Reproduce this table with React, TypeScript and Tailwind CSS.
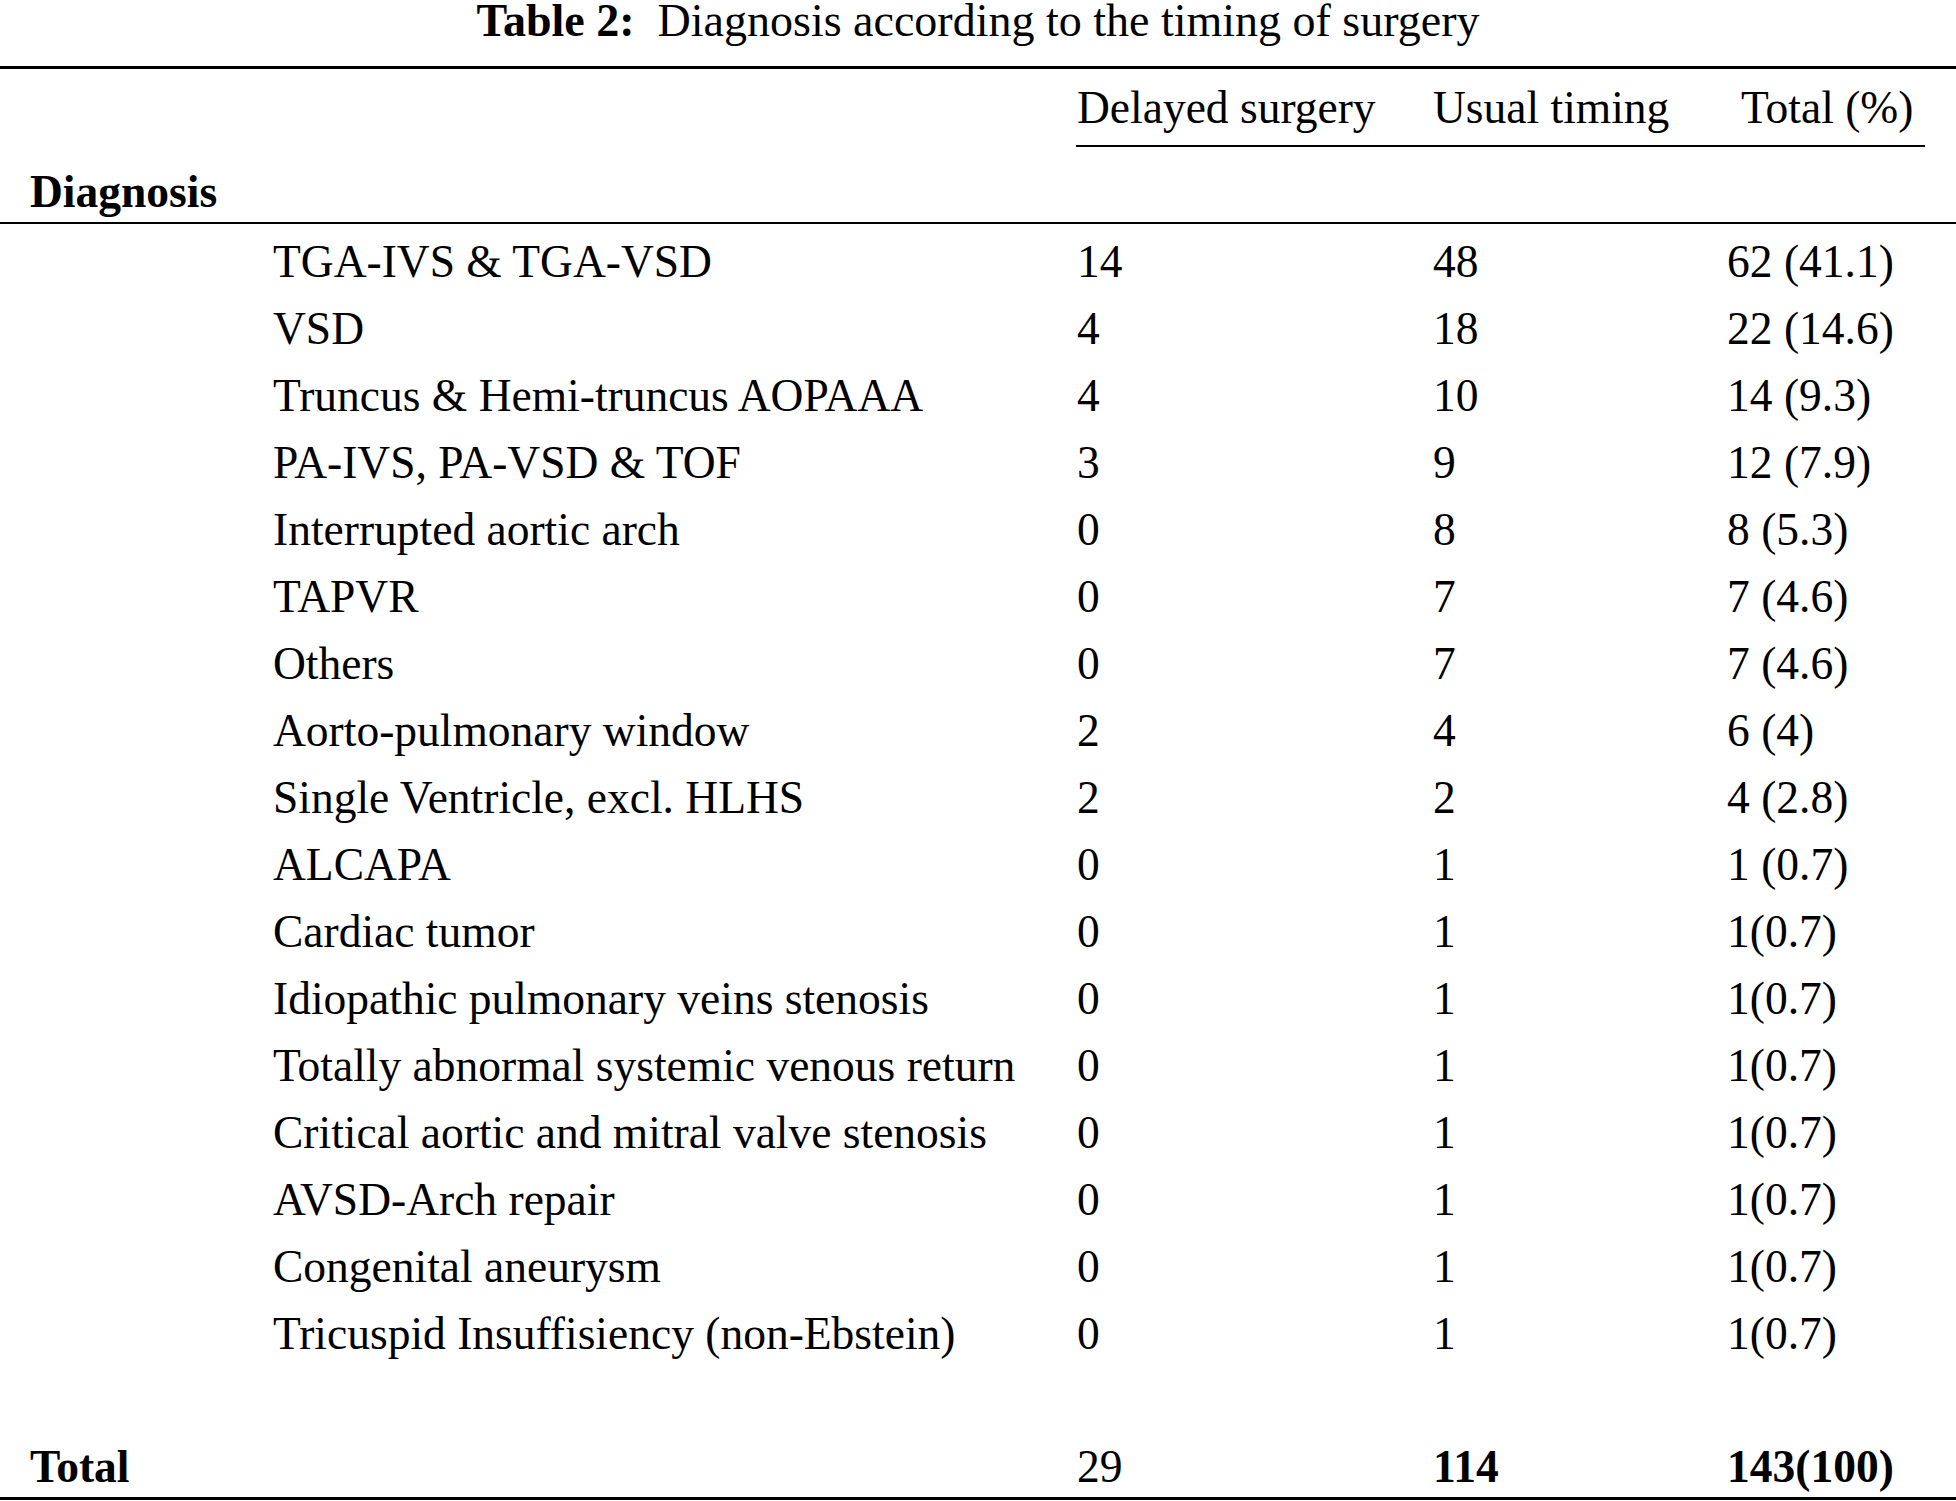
const rows: [string, string, string, string][] = [
  ["TGA-IVS & TGA-VSD", "14", "48", "62 (41.1)"],
  ["VSD", "4", "18", "22 (14.6)"],
  ["Truncus & Hemi-truncus AOPAAA", "4", "10", "14 (9.3)"],
  ["PA-IVS, PA-VSD & TOF", "3", "9", "12 (7.9)"],
  ["Interrupted aortic arch", "0", "8", "8 (5.3)"],
  ["TAPVR", "0", "7", "7 (4.6)"],
  ["Others", "0", "7", "7 (4.6)"],
  ["Aorto-pulmonary window", "2", "4", "6 (4)"],
  ["Single Ventricle, excl. HLHS", "2", "2", "4 (2.8)"],
  ["ALCAPA", "0", "1", "1 (0.7)"],
  ["Cardiac tumor", "0", "1", "1(0.7)"],
  ["Idiopathic pulmonary veins stenosis", "0", "1", "1(0.7)"],
  ["Totally abnormal systemic venous return", "0", "1", "1(0.7)"],
  ["Critical aortic and mitral valve stenosis", "0", "1", "1(0.7)"],
  ["AVSD-Arch repair", "0", "1", "1(0.7)"],
  ["Congenital aneurysm", "0", "1", "1(0.7)"],
  ["Tricuspid Insuffisiency (non-Ebstein)", "0", "1", "1(0.7)"],
];

export default function App() {
  return (
    <div className="w-[1956px] h-[1501px] bg-white text-black font-['Liberation_Serif','Times_New_Roman',serif] text-[45.5px] overflow-hidden">
      {/* caption */}
      <div className="h-[41px] leading-[41px] text-[46px] text-center whitespace-pre">
        <span className="font-bold">Table 2:</span>
        {"  Diagnosis according to the timing of surgery"}
      </div>

      {/* top rule */}
      <div className="mt-[25px] h-[3px] bg-black" />

      {/* column heads */}
      <div className="grid grid-cols-[1077px_356px_1fr] pt-[5px] leading-[67px] whitespace-nowrap">
        <div />
        <div>Delayed surgery</div>
        <div>Usual timing</div>
      </div>
      <div className="-mt-[67px] pl-[1741px] leading-[67px] whitespace-nowrap">
        Total (%)
      </div>
      <div className="mt-[4px] ml-[1076px] w-[849px] h-[2px] bg-black" />

      {/* stub head */}
      <div className="h-[75px] flex items-end pb-[5px] pl-[30px]">
        <span className="font-bold leading-[50px]">Diagnosis</span>
      </div>
      <div className="h-[2px] bg-black" />

      {/* body */}
      <div className="pt-[4px]">
        {rows.map((r) => (
          <div
            key={r[0]}
            className="grid grid-cols-[273px_804px_356px_294px_1fr] leading-[67px] whitespace-nowrap"
          >
            <div />
            <div>{r[0]}</div>
            <div>{r[1]}</div>
            <div>{r[2]}</div>
            <div>{r[3]}</div>
          </div>
        ))}
      </div>

      <div className="h-[70px]" />

      {/* total */}
      <div className="grid grid-cols-[1077px_356px_294px_1fr] leading-[60px] whitespace-nowrap">
        <div className="pl-[30px] font-bold">Total</div>
        <div>29</div>
        <div className="font-bold">114</div>
        <div className="font-bold">143(100)</div>
      </div>
      <div className="h-[3px] bg-black" />
    </div>
  );
}
